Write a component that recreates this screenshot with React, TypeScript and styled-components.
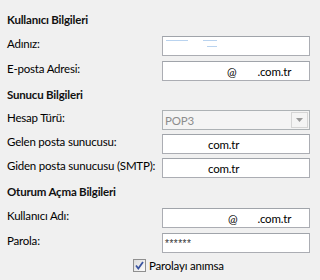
import React from 'react'
import styled, { createGlobalStyle } from 'styled-components'

const GlobalStyle = createGlobalStyle`
  html, body {
    margin: 0;
    padding: 0;
    background: #f0f0f0;
  }
  body {
    font-family: Lato, "Liberation Sans", Arial, sans-serif;
    font-size: 11.5px;
    letter-spacing: -0.2px;
    color: #000;
  }
`

const Panel = styled.div`
  width: 315px;
  height: 280px;
  box-sizing: border-box;
  padding: 12px 5px 0 7px;
  background: #f0f0f0;
  display: flex;
  flex-direction: column;
`

const Section = styled.div<{ $gap: number; $first?: boolean }>`
  display: flex;
  flex-direction: column;
  gap: ${({ $gap }) => $gap}px;
  margin-top: ${({ $first }) => ($first ? 0 : 6)}px;
`

const Heading = styled.div`
  height: 16px;
  line-height: 16px;
  font-weight: bold;
  color: #111;
  margin-bottom: 3px;
`

const Row = styled.div`
  display: grid;
  grid-template-columns: 155px 148px;
  align-items: start;
  height: 20px;
`

const Label = styled.div`
  line-height: 16px;
  white-space: nowrap;
`

const Field = styled.div<{ $pad: number }>`
  box-sizing: border-box;
  height: 20px;
  background: #fff;
  border: 1px solid #abadb3;
  border-top-color: #a0a4aa;
  display: flex;
  align-items: center;
  padding-left: ${({ $pad }) => $pad}px;
  white-space: nowrap;
  overflow: hidden;
`

const Gap = styled.span<{ $w: number }>`
  display: inline-block;
  width: ${({ $w }) => $w}px;
`

const SmudgeField = styled(Field)`
  position: relative;
`

const Smudge = styled.span<{ $w: number; $top: number; $left: number }>`
  position: absolute;
  top: ${({ $top }) => $top}px;
  left: ${({ $left }) => $left}px;
  width: ${({ $w }) => $w}px;
  height: 1px;
  background: #b9d3ef;
`

const Select = styled.div`
  box-sizing: border-box;
  height: 20px;
  background: #f4f4f4;
  border: 1px solid #adb2b5;
  display: flex;
  align-items: stretch;
  color: #8d8d8d;
`

const SelectText = styled.div`
  flex: 1;
  display: flex;
  align-items: center;
  padding-left: 2px;
`

const ArrowButton = styled.div`
  width: 17px;
  box-sizing: border-box;
  margin: 1px;
  border: 1px solid #d5d5d5;
  background: #f4f4f4;
  display: flex;
  align-items: center;
  justify-content: center;
`

const Password = styled.span`
  font-family: "Liberation Sans", Arial, sans-serif;
  font-size: 10px;
  letter-spacing: 0.5px;
  color: #333;
`

const CheckRow = styled.label`
  display: flex;
  align-items: center;
  gap: 3px;
  margin-top: 5px;
  margin-left: 126px;
  height: 14px;
`

const CheckBox = styled.span`
  width: 13px;
  height: 13px;
  box-sizing: border-box;
  border: 1px solid #8f8f8f;
  background: linear-gradient(135deg, #dcdcdc, #fbfbfb);
  display: flex;
  align-items: center;
  justify-content: center;
`

export default function App() {
  return (
    <>
      <GlobalStyle />
      <Panel>
        <Section $gap={5} $first>
          <Heading>Kullanıcı Bilgileri</Heading>
          <Row>
            <Label>Adınız:</Label>
            <SmudgeField $pad={2}>
              <Smudge $w={22} $top={3} $left={3} />
              <Smudge $w={14} $top={3} $left={40} />
              <Smudge $w={10} $top={9} $left={44} />
            </SmudgeField>
          </Row>
          <Row>
            <Label>E-posta Adresi:</Label>
            <Field $pad={64}>
              @<Gap $w={21} />.com.tr
            </Field>
          </Row>
        </Section>

        <Section $gap={4}>
          <Heading>Sunucu Bilgileri</Heading>
          <Row>
            <Label>Hesap Türü:</Label>
            <Select>
              <SelectText>POP3</SelectText>
              <ArrowButton>
                <svg width="7" height="4" viewBox="0 0 7 4">
                  <path d="M0 0h7L3.5 4z" fill="#9a9a9a" />
                </svg>
              </ArrowButton>
            </Select>
          </Row>
          <Row>
            <Label>Gelen posta sunucusu:</Label>
            <Field $pad={45}>com.tr</Field>
          </Row>
          <Row>
            <Label>Giden posta sunucusu (SMTP):</Label>
            <Field $pad={45}>com.tr</Field>
          </Row>
        </Section>

        <Section $gap={5}>
          <Heading>Oturum Açma Bilgileri</Heading>
          <Row>
            <Label>Kullanıcı Adı:</Label>
            <Field $pad={65}>
              @<Gap $w={20} />.com.tr
            </Field>
          </Row>
          <Row>
            <Label>Parola:</Label>
            <Field $pad={2}>
              <Password>******</Password>
            </Field>
          </Row>
        </Section>

        <CheckRow>
          <CheckBox>
            <svg width="9" height="9" viewBox="0 0 9 9">
              <path d="M1 4.5l2.3 3L8 1" stroke="#3a54a0" strokeWidth="1.8" fill="none" />
            </svg>
          </CheckBox>
          Parolayı anımsa
        </CheckRow>
      </Panel>
    </>
  )
}
